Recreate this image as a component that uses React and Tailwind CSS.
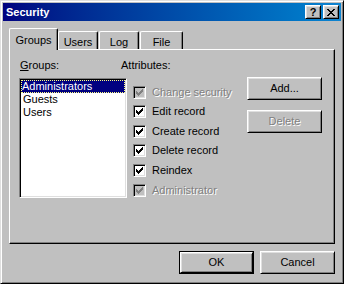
const FACE = "bg-[#c0c0c0]";

// raised 3d edge used by buttons
const raised =
  "border border-t-white border-l-white border-r-black border-b-black shadow-[inset_1px_1px_#dfdfdf,inset_-1px_-1px_#808080]";
// sunken edge used by list box and check boxes
const sunken =
  "border border-t-[#808080] border-l-[#808080] border-r-white border-b-white shadow-[inset_1px_1px_#000,inset_-1px_-1px_#dfdfdf]";

const attributes = [
  { label: "Change security", checked: true, disabled: true, h: "h-[19px]" },
  { label: "Edit record", checked: true, h: "h-[20px]" },
  { label: "Create record", checked: true, h: "h-[19px]" },
  { label: "Delete record", checked: true, h: "h-[20px]" },
  { label: "Reindex", checked: true, h: "h-[20px]" },
  { label: "Administrator", checked: true, disabled: true, h: "h-[13px]" },
];

const tabs = [
  { name: "Groups", active: true, w: "w-[49px]", ml: "" },
  { name: "Users", w: "w-[40px]", ml: "ml-0" },
  { name: "Log", w: "w-[40px]", ml: "ml-[1px]" },
  { name: "File", w: "w-[43px]", ml: "ml-[1px]" },
];

function CheckMark({ color }) {
  const cols = [2, 3, 4, 3, 2, 1, 0];
  return (
    <svg width="7" height="7" viewBox="0 0 7 7" shapeRendering="crispEdges">
      {cols.map((y, x) => (
        <rect key={x} x={x} y={y} width="1" height="3" fill={color} />
      ))}
    </svg>
  );
}

function CheckBox({ checked, disabled }) {
  return (
    <div
      className={`w-[13px] h-[13px] shrink-0 flex items-center justify-center ${sunken} ${
        disabled ? "bg-[#c0c0c0]" : "bg-white"
      }`}
    >
      {checked && <CheckMark color={disabled ? "#808080" : "#000"} />}
    </div>
  );
}

function Button({ children, disabled, isDefault }) {
  const inner = (
    <div
      className={`h-full w-full flex items-center justify-center ${FACE} ${raised}`}
    >
      <span
        className={
          disabled ? "text-[#808080] [text-shadow:1px_1px_#fff]" : "text-black"
        }
      >
        {children}
      </span>
    </div>
  );
  if (isDefault) {
    return <div className="w-[75px] h-[23px] border border-black">{inner}</div>;
  }
  return <div className="w-[75px] h-[23px]">{inner}</div>;
}

function CloseGlyph() {
  const rows = [
    [0, 1, 6, 7],
    [1, 2, 5, 6],
    [2, 3, 4, 5],
    [3, 4],
    [2, 3, 4, 5],
    [1, 2, 5, 6],
    [0, 1, 6, 7],
  ];
  return (
    <svg width="8" height="7" viewBox="0 0 8 7" shapeRendering="crispEdges">
      {rows.map((xs, y) =>
        xs.map((x) => <rect key={`${x}-${y}`} x={x} y={y} width="1" height="1" fill="#000" />)
      )}
    </svg>
  );
}

function TitleButton({ children }) {
  return (
    <div
      className={`w-[16px] h-[14px] flex items-center justify-center ${FACE} ${raised}`}
    >
      {children}
    </div>
  );
}

export default function App() {
  return (
    <div
      className={`w-[344px] h-[284px] ${FACE} p-[2px] border border-t-[#dfdfdf] border-l-[#dfdfdf] border-r-black border-b-black shadow-[inset_1px_1px_#fff,inset_-1px_-1px_#808080] font-['Liberation_Sans',Arial,sans-serif] text-[11px] leading-[13px] text-black select-none`}
    >
      {/* title bar */}
      <div className="h-[18px] flex items-center justify-between pl-[3px] pr-[2px] bg-gradient-to-r from-[#000080] to-[#1084d0]">
        <span className="text-white font-bold text-[11px]">Security</span>
        <div className="flex gap-[2px]">
          <TitleButton>
            <span className="font-bold text-[11px] leading-[11px] mt-[1px]">?</span>
          </TitleButton>
          <TitleButton>
            <CloseGlyph />
          </TitleButton>
        </div>
      </div>

      <div className="px-[6px] pt-[7px]">
        {/* tabs */}
        <div className="h-[21px] flex items-end">
          {tabs.map((t) => (
            <div
              key={t.name}
              className={`${t.w} ${t.ml} ${
                t.active
                  ? "h-[22px] -mb-[1px] relative z-10 pt-[5px]"
                  : "h-[18px] pt-[4px]"
              } ${FACE} flex justify-center border-l border-t border-r border-l-white border-t-white border-r-black rounded-t-[2px] shadow-[inset_-1px_0_#808080]`}
            >
              {t.name}
            </div>
          ))}
        </div>

        {/* tab panel */}
        <div
          className={`h-[195px] w-[326px] ${FACE} border border-t-white border-l-white border-r-black border-b-black shadow-[inset_-1px_-1px_#808080] flex pl-[9px]`}
        >
          <div className="w-[108px] shrink-0 pt-[9px]">
            <div className="pl-[1px]">
              <span className="underline">G</span>roups:
            </div>
            <div className={`mt-[6px] h-[120px] bg-white ${sunken} p-[1px]`}>
              <div className="h-[13px] bg-[#000080] text-white pl-[1px] outline-1 outline-dotted outline-[#ffff80] -outline-offset-1">
                Administrators
              </div>
              <div className="h-[13px] pl-[2px]">Guests</div>
              <div className="h-[13px] pl-[2px]">Users</div>
            </div>
          </div>

          <div className="w-[126px] shrink-0 -ml-[6px] pt-[9px]">
            <div>Attributes:</div>
            <div className="mt-[14px] pl-[12px]">
              {attributes.map((a) => (
                <div key={a.label} className={`${a.h} flex items-start gap-[6px]`}>
                  <CheckBox checked={a.checked} disabled={a.disabled} />
                  <span
                    className={
                      a.disabled
                        ? "text-[#808080] [text-shadow:1px_1px_#fff]"
                        : "text-black"
                    }
                  >
                    {a.label}
                  </span>
                </div>
              ))}
            </div>
          </div>

          <div className="pt-[27px] flex flex-col gap-[10px]">
            <Button>Add...</Button>
            <Button disabled>Delete</Button>
          </div>
        </div>

        {/* bottom buttons */}
        <div className="mt-[7px] flex justify-end gap-[6px]">
          <Button isDefault>OK</Button>
          <Button>Cancel</Button>
        </div>
      </div>
    </div>
  );
}
